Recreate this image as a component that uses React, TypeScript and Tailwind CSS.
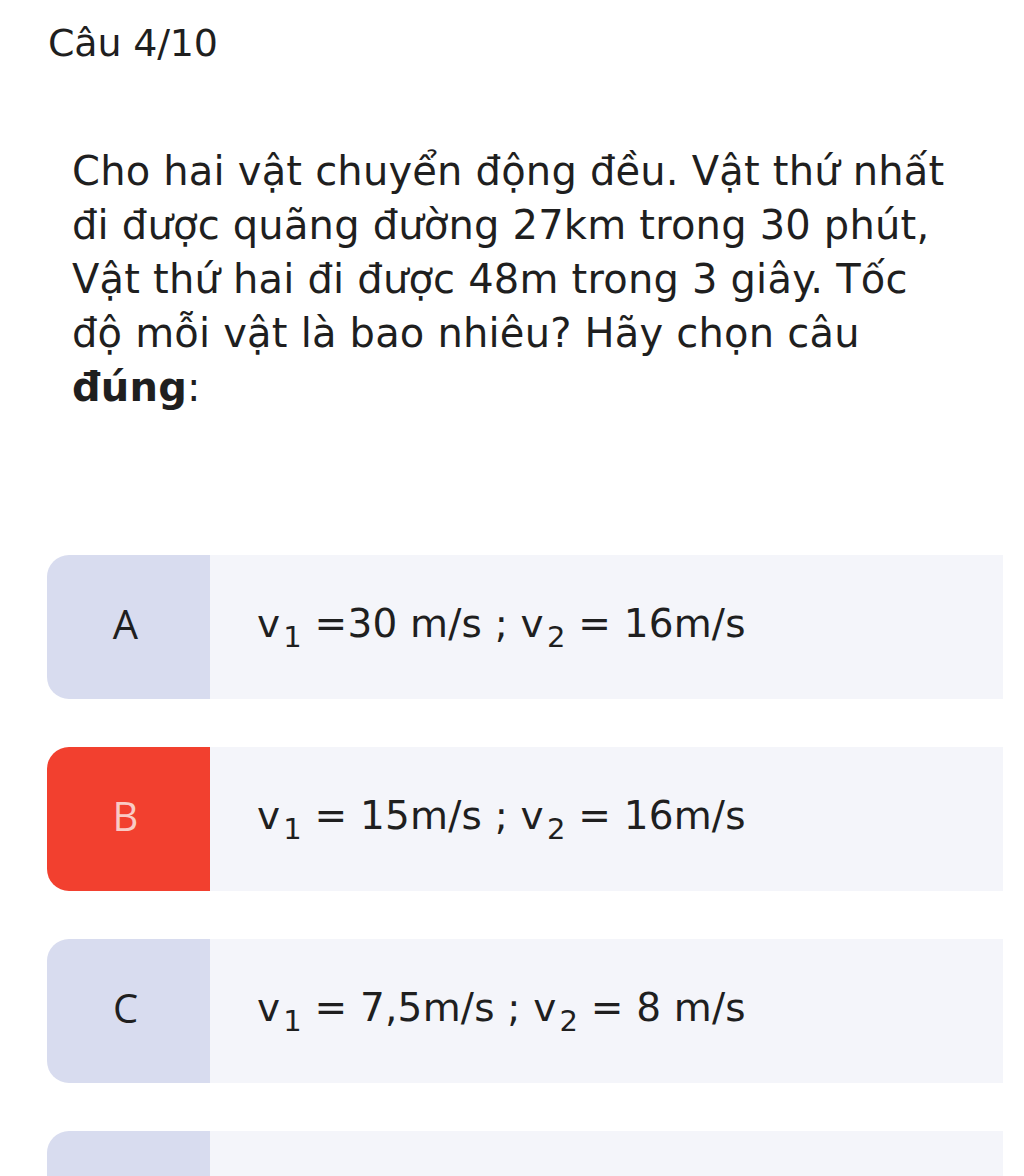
import React from "react";

type Opt = { key: string; v1: string; v2: string; selected?: boolean };

const options: Opt[] = [
  { key: "A", v1: " =30 m/s ; v", v2: " = 16m/s" },
  { key: "B", v1: " = 15m/s ; v", v2: " = 16m/s", selected: true },
  { key: "C", v1: " = 7,5m/s ; v", v2: " = 8 m/s" },
  { key: "D", v1: " = 30m/s ; v", v2: " = 8 m/s" },
];

function Sub({ children }: { children: React.ReactNode }) {
  return (
    <span className="relative top-[10px] text-[29px] leading-none ml-[3px]">{children}</span>
  );
}

export default function App() {
  return (
    <div className="w-[1024px] h-[1176px] overflow-hidden bg-white text-[#1f1f1f]">
      <div className="pl-[48px] pt-[17px] text-[38px] leading-[52px] font-['DejaVu_Sans',sans-serif] tracking-[-0.2px]">
        Câu 4/10
      </div>
      <div className="pl-[72px] pr-[10px] pt-[75px] text-[40px] leading-[54px] font-['DejaVu_Sans',sans-serif] tracking-[0.2px]">
        Cho hai vật chuyển động đều. Vật thứ nhất
        <br />
        đi được quãng đường 27km trong 30 phút,
        <br />
        Vật thứ hai đi được 48m trong 3 giây. Tốc
        <br />
        độ mỗi vật là bao nhiêu? Hãy chọn câu
        <br />
        <span className="font-bold">đúng</span>:
      </div>
      <div className="mt-[141px] ml-[47px] w-[956px] flex flex-col gap-[48px]">
        {options.map((o) => (
          <div key={o.key} className="flex h-[144px] shrink-0">
            <div
              className={
                o.selected
                  ? "w-[163px] rounded-l-[22px] bg-[#f2402f] text-[#f9cbc5] flex items-center justify-center text-[40px] font-['Open_Sans',sans-serif]"
                  : "w-[163px] rounded-l-[22px] bg-[#d8dcef] text-[#1f1f1f] flex items-center justify-center text-[40px] font-['Open_Sans',sans-serif]"
              }
            >
              <span className="-mt-[6px] -ml-[6px]">{o.key}</span>
            </div>
            <div className="flex-1 bg-[#f4f5fa] flex items-center pl-[47px] text-[39px] font-['DejaVu_Sans',sans-serif] tracking-[0.2px] text-[#1f1f1f]">
              <span className="-mt-[6px]">
                v<Sub>1</Sub>
                {o.v1}
                <Sub>2</Sub>
                {o.v2}
              </span>
            </div>
          </div>
        ))}
      </div>
    </div>
  );
}
